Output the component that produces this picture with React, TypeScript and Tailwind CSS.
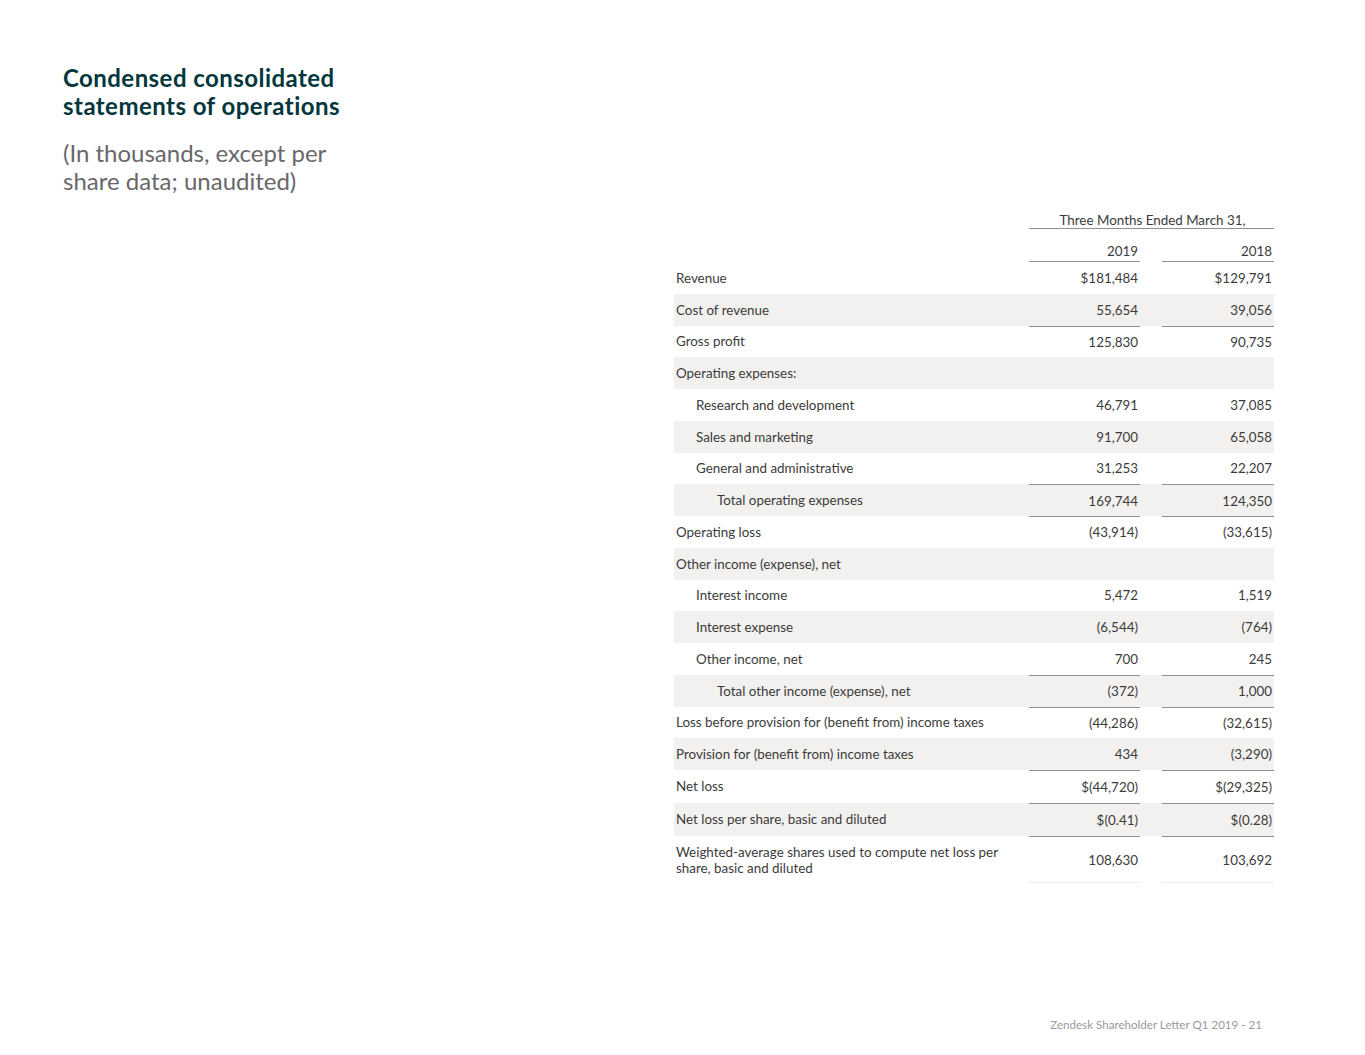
import React from 'react'

type Row = {
  label: string
  v1: string
  v2: string
  indent?: number
  top?: boolean
  h?: string
}

const rows: Row[] = [
  { label: 'Revenue', v1: '$181,484', v2: '$129,791' },
  { label: 'Cost of revenue', v1: '55,654', v2: '39,056' },
  { label: 'Gross profit', v1: '125,830', v2: '90,735', top: true },
  { label: 'Operating expenses:', v1: '', v2: '' },
  { label: 'Research and development', v1: '46,791', v2: '37,085', indent: 1 },
  { label: 'Sales and marketing', v1: '91,700', v2: '65,058', indent: 1 },
  { label: 'General and administrative', v1: '31,253', v2: '22,207', indent: 1 },
  { label: 'Total operating expenses', v1: '169,744', v2: '124,350', indent: 2, top: true },
  { label: 'Operating loss', v1: '(43,914)', v2: '(33,615)', top: true },
  { label: 'Other income (expense), net', v1: '', v2: '' },
  { label: 'Interest income', v1: '5,472', v2: '1,519', indent: 1 },
  { label: 'Interest expense', v1: '(6,544)', v2: '(764)', indent: 1 },
  { label: 'Other income, net', v1: '700', v2: '245', indent: 1 },
  { label: 'Total other income (expense), net', v1: '(372)', v2: '1,000', indent: 2, top: true },
  { label: 'Loss before provision for (benefit from) income taxes', v1: '(44,286)', v2: '(32,615)', top: true },
  { label: 'Provision for (benefit from) income taxes', v1: '434', v2: '(3,290)' },
  { label: 'Net loss', v1: '$(44,720)', v2: '$(29,325)', top: true, h: 'h-[32.5px]' },
  { label: 'Net loss per share, basic and diluted', v1: '$(0.41)', v2: '$(0.28)', top: true, h: 'h-[33.5px]' },
]

const indentClass = ['pl-[2px]', 'pl-[22px]', 'pl-[43px]']

const TableRow = ({ row, shaded }: { row: Row; shaded: boolean }) => {
  const line = row.top ? 'border-t border-[#8f8f8f]' : ''
  return (
    <div className={`grid grid-cols-[355px_111px_22px_112px] ${row.h ?? 'h-[31.75px]'} ${shaded ? 'bg-[#f3f1ef]' : ''}`}>
      <div className={`flex items-center ${indentClass[row.indent ?? 0]}`}>{row.label}</div>
      <div className={`flex items-center justify-end pr-[2px] ${line}`}>{row.v1}</div>
      <div />
      <div className={`flex items-center justify-end pr-[2px] ${line}`}>{row.v2}</div>
    </div>
  )
}

export default function App() {
  return (
    <div className="w-[1365px] h-[1055px] bg-white flex flex-col px-[63px] pt-[64px] pb-[23px] font-['Lato','Liberation_Sans',sans-serif]">
      {/* heading */}
      <div className="w-[300px]">
        <h1 className="text-[24px] leading-[28px] font-bold tracking-[0.45px] text-[#03363d]">
          Condensed consolidated statements of operations
        </h1>
        <p className="mt-[19px] text-[24px] leading-[28px] text-[#68676a]">
          (In thousands, except per share data; unaudited)
        </p>
      </div>

      {/* table */}
      <div className="ml-[611px] mt-[12px] w-[600px] text-[13.4px] leading-[16px] text-[#3b3b3b]">
        <div className="grid grid-cols-[355px_245px] h-[22px]">
          <div />
          <div className="flex items-end justify-center border-b border-[#8f8f8f] pl-[2px]">
            Three Months Ended March 31,
          </div>
        </div>
        <div className="grid grid-cols-[355px_111px_22px_112px] h-[33px]">
          <div />
          <div className="flex items-end justify-end pr-[2px] pb-[2px] border-b border-[#8f8f8f]">2019</div>
          <div />
          <div className="flex items-end justify-end pr-[2px] pb-[2px] border-b border-[#8f8f8f]">2018</div>
        </div>

        {rows.map((r, i) => (
          <TableRow key={i} row={r} shaded={i % 2 === 1} />
        ))}

        <div className="grid grid-cols-[355px_111px_22px_112px] h-[47px]">
          <div className="flex items-center pl-[2px] pr-[20px]">
            Weighted-average shares used to compute net loss per share, basic and diluted
          </div>
          <div className="flex items-center justify-end pr-[2px] border-y border-t-[#8f8f8f] border-b-[#ececec]">108,630</div>
          <div />
          <div className="flex items-center justify-end pr-[2px] border-y border-t-[#8f8f8f] border-b-[#ececec]">103,692</div>
        </div>
      </div>

      {/* footer */}
      <div className="mt-auto flex justify-end pr-[40px] text-[11.6px] leading-[14px] text-[#9a9a9a]">
        Zendesk Shareholder Letter Q1 2019 - 21
      </div>
    </div>
  )
}
